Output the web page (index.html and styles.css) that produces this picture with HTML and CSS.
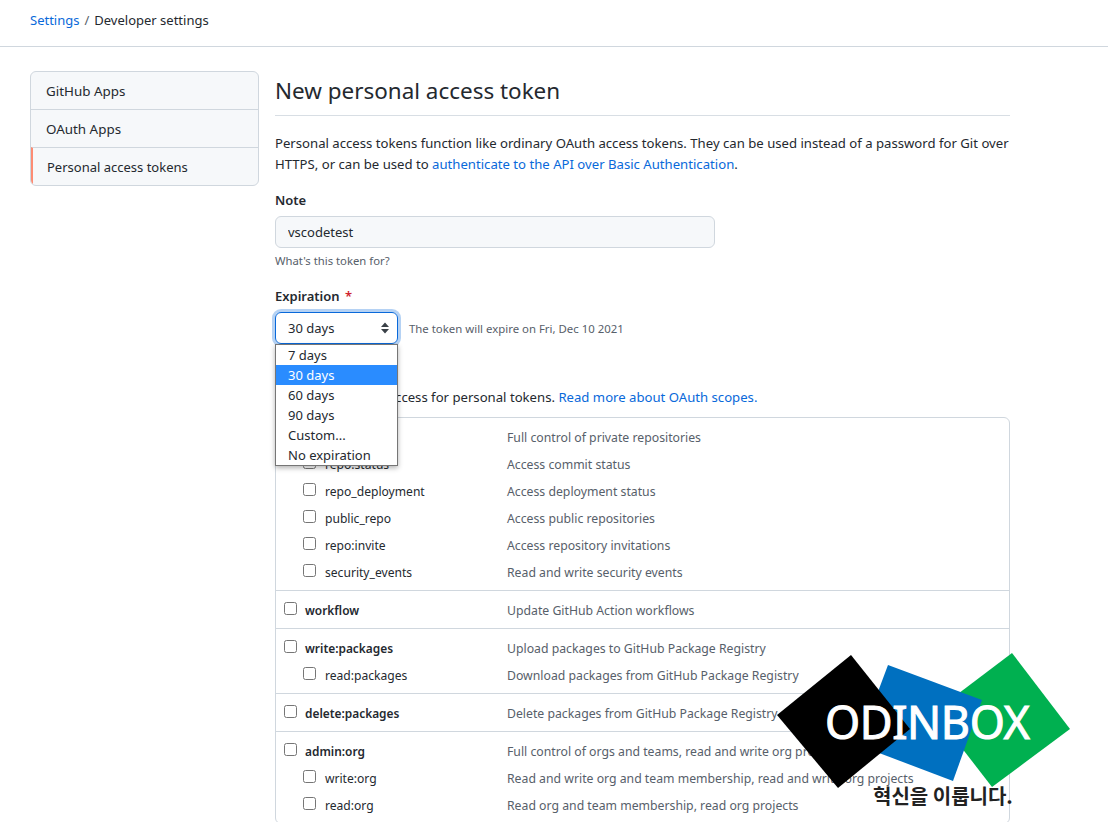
FILE: index.html
```html
<!DOCTYPE html>
<html lang="en">
<head>
  <meta charset="UTF-8">
  <link rel="stylesheet" href="styles.css">
  <title>New personal access token</title>
</head>
<body>
  <!-- breadcrumb -->
  <div class="crumbs">
    <a href="#">Settings</a><span class="sep">/</span><span>Developer settings</span>
  </div>

  <div class="page">
    <nav class="side">
      <a class="side-item wide" href="#">GitHub Apps</a>
      <a class="side-item wide" href="#">OAuth Apps</a>
      <a class="side-item selected" href="#">Personal access tokens</a>
    </nav>

    <main class="main">
      <h1 class="title">New personal access token</h1>
      <p class="intro">Personal access tokens function like ordinary OAuth access tokens. They can be used instead of a password for Git over HTTPS, or can be used to <a href="#">authenticate to the API over Basic Authentication</a>.</p>

      <label class="label">Note</label>
      <input class="note" type="text" value="vscodetest">
      <p class="hint">What's this token for?</p>

      <label class="label exp-label">Expiration <span class="req">*</span></label>
      <div class="exp-row">
        <div class="select">
          <span>30 days</span>
          <svg width="10" height="14" viewBox="0 0 10 14"><path d="M5 1.5 9 6H1z M5 12.5 1 8h8z" fill="#3a4148"/></svg>
        </div>
        <span class="exp-note">The token will expire on Fri, Dec 10 2021</span>
        <ul class="options">
          <li>7 days</li>
          <li class="on">30 days</li>
          <li>60 days</li>
          <li>90 days</li>
          <li>Custom...</li>
          <li>No expiration</li>
        </ul>
      </div>

      <label class="label scopes-label">Select scopes</label>
      <p class="scopes-text">Scopes define the access for personal tokens. <a href="#">Read more about OAuth scopes.</a></p>

      <div class="scopes">
        <div class="group">
          <div class="scope top"><span class="name"><i class="box"></i><b>repo</b></span><span class="desc">Full control of private repositories</span></div>
          <div class="scope"><span class="name"><i class="box"></i>repo:status</span><span class="desc">Access commit status</span></div>
          <div class="scope"><span class="name"><i class="box"></i>repo_deployment</span><span class="desc">Access deployment status</span></div>
          <div class="scope"><span class="name"><i class="box"></i>public_repo</span><span class="desc">Access public repositories</span></div>
          <div class="scope"><span class="name"><i class="box"></i>repo:invite</span><span class="desc">Access repository invitations</span></div>
          <div class="scope"><span class="name"><i class="box"></i>security_events</span><span class="desc">Read and write security events</span></div>
        </div>
        <div class="group">
          <div class="scope top"><span class="name"><i class="box"></i><b>workflow</b></span><span class="desc">Update GitHub Action workflows</span></div>
        </div>
        <div class="group">
          <div class="scope top"><span class="name"><i class="box"></i><b>write:packages</b></span><span class="desc">Upload packages to GitHub Package Registry</span></div>
          <div class="scope"><span class="name"><i class="box"></i>read:packages</span><span class="desc">Download packages from GitHub Package Registry</span></div>
        </div>
        <div class="group">
          <div class="scope top"><span class="name"><i class="box"></i><b>delete:packages</b></span><span class="desc">Delete packages from GitHub Package Registry</span></div>
        </div>
        <div class="group">
          <div class="scope top"><span class="name"><i class="box"></i><b>admin:org</b></span><span class="desc">Full control of orgs and teams, read and write org projects</span></div>
          <div class="scope"><span class="name"><i class="box"></i>write:org</span><span class="desc">Read and write org and team membership, read and write org projects</span></div>
          <div class="scope"><span class="name"><i class="box"></i>read:org</span><span class="desc">Read org and team membership, read org projects</span></div>
        </div>
      </div>
    </main>
  </div>

  <!-- watermark logo -->
  <div class="logo">
    <svg width="296" height="136" viewBox="0 0 296 136">
      <polygon points="236,1 294,77 216,135 158,60" fill="#00b050"/>
      <polygon points="112,13 206,48 177,129 82,93" fill="#0070c0"/>
      <polygon points="75,3 134,77 62,136 1,63" fill="#000"/>
    </svg>
    <span class="logo-name">ODINBOX</span>
    <span class="logo-sub">혁신을 이룹니다.</span>
  </div>
</body>
</html>
```

FILE: styles.css
```css
html, body {
  margin: 0;
  height: 100%;
  overflow: hidden;
}

body {
  position: relative;
  font-family: "Noto Sans", "Open Sans", sans-serif;
  font-size: 13px;
  line-height: 21px;
  color: #24292f;
  background: #fff;
}

a {
  color: #0969da;
  text-decoration: none;
}

p {
  margin: 0;
}

.crumbs {
  height: 46px;
  box-sizing: content-box;
  padding-left: 30px;
  border-bottom: 1px solid #d0d7de;
  line-height: 41px;
}

.sep {
  margin: 0 5px;
  color: #57606a;
}

.page {
  display: flex;
  gap: 16px;
  padding: 24px 98px 0 30px;
}

.side {
  flex: none;
  align-self: flex-start;
  width: 229px;
  box-sizing: border-box;
  border: 1px solid #d0d7de;
  border-radius: 6px;
  background: #f6f8fa;
  overflow: hidden;
}

.side-item {
  display: block;
  height: 37px;
  padding-left: 15px;
  line-height: 39px;
  color: #24292f;
  border-top: 1px solid #d0d7de;
}

.side-item:first-child {
  border-top: 0;
}

.wide {
  font-size: 13.4px;
}

.selected {
  padding-left: 14px;
  border-left: 2px solid #fd8c73;
}

.main {
  flex: 1;
  min-width: 0;
}

.title {
  margin: 0 0 17px;
  height: 44px;
  border-bottom: 1px solid #d8dee4;
  font-size: 22.45px;
  font-weight: 400;
  line-height: 40px;
}

.intro {
  margin-bottom: 15px;
  font-size: 13.15px;
}

.label {
  display: block;
  font-weight: 600;
  line-height: 21px;
}

.note {
  display: block;
  width: 440px;
  height: 32px;
  box-sizing: border-box;
  margin-top: 5px;
  padding: 0 12px;
  border: 1px solid #d0d7de;
  border-radius: 6px;
  background: #f6f8fa;
  font: inherit;
  color: #24292f;
}

.hint {
  margin-top: 2px;
  font-size: 11.3px;
  line-height: 21px;
  color: #57606a;
}

.exp-label {
  margin-top: 15px;
}

.req {
  color: #cf222e;
  margin-left: 2px;
}

.exp-row {
  position: relative;
  display: flex;
  align-items: center;
  gap: 11px;
  margin-top: 5px;
}

.select {
  display: flex;
  align-items: center;
  justify-content: space-between;
  width: 123px;
  height: 32px;
  box-sizing: border-box;
  padding: 0 7px 0 12px;
  border: 1px solid #0969da;
  border-radius: 6px;
  box-shadow: 0 0 0 3px rgba(9, 105, 218, 0.3);
}

.exp-note {
  font-size: 11.4px;
  color: #57606a;
}

/* open native list, sits over the text below */
.options {
  position: absolute;
  top: 32px;
  left: 0;
  z-index: 2;
  width: 123px;
  box-sizing: border-box;
  margin: 0;
  padding: 0;
  list-style: none;
  background: #fff;
  border: 1px solid #767676;
  box-shadow: 0 2px 5px rgba(0, 0, 0, 0.3);
  line-height: 20px;
}

.options li {
  height: 20px;
  padding-left: 12px;
}

.options .on {
  background: #2a8cff;
  color: #fff;
}

.scopes-label {
  margin-top: 20px;
}

.scopes-text {
  margin-top: 2px;
  font-size: 13.15px;
}

.scopes {
  margin-top: 9px;
  border: 1px solid #d0d7de;
  border-radius: 6px;
}

.group {
  padding: 6px 8px 4px;
  border-top: 1px solid #d0d7de;
}

.group:first-child {
  border-top: 0;
}

.scope {
  display: flex;
  height: 27px;
  align-items: center;
}

.name {
  display: flex;
  align-items: center;
  width: 223px;
  flex: none;
  padding-left: 19px;
  box-sizing: border-box;
  font-size: 12.1px;
}

.top .name {
  padding-left: 0;
}

.box {
  flex: none;
  width: 13px;
  height: 13px;
  box-sizing: border-box;
  margin: 0 9px 4px 0;
  border: 1px solid #767676;
  border-radius: 2.5px;
  background: #fff;
}

.top .box {
  margin-right: 8px;
}

.name b {
  font-size: 11.9px;
  font-weight: 600;
}

.desc {
  font-size: 12.25px;
  color: #57606a;
}

.logo {
  position: absolute;
  left: 776px;
  top: 652px;
  z-index: 3;
  width: 296px;
  height: 160px;
}

.logo-name {
  position: absolute;
  left: 49px;
  top: 45px;
  font-size: 45px;
  line-height: 50px;
  font-weight: 400;
  letter-spacing: -0.4px;
  -webkit-text-stroke: 1px #fff;
  color: #fff;
}

.logo-sub {
  position: absolute;
  left: 97px;
  top: 132px;
  font-family: "Noto Sans CJK KR", sans-serif;
  font-size: 20px;
  line-height: 24px;
  font-weight: 700;
  color: #222;
}
```
